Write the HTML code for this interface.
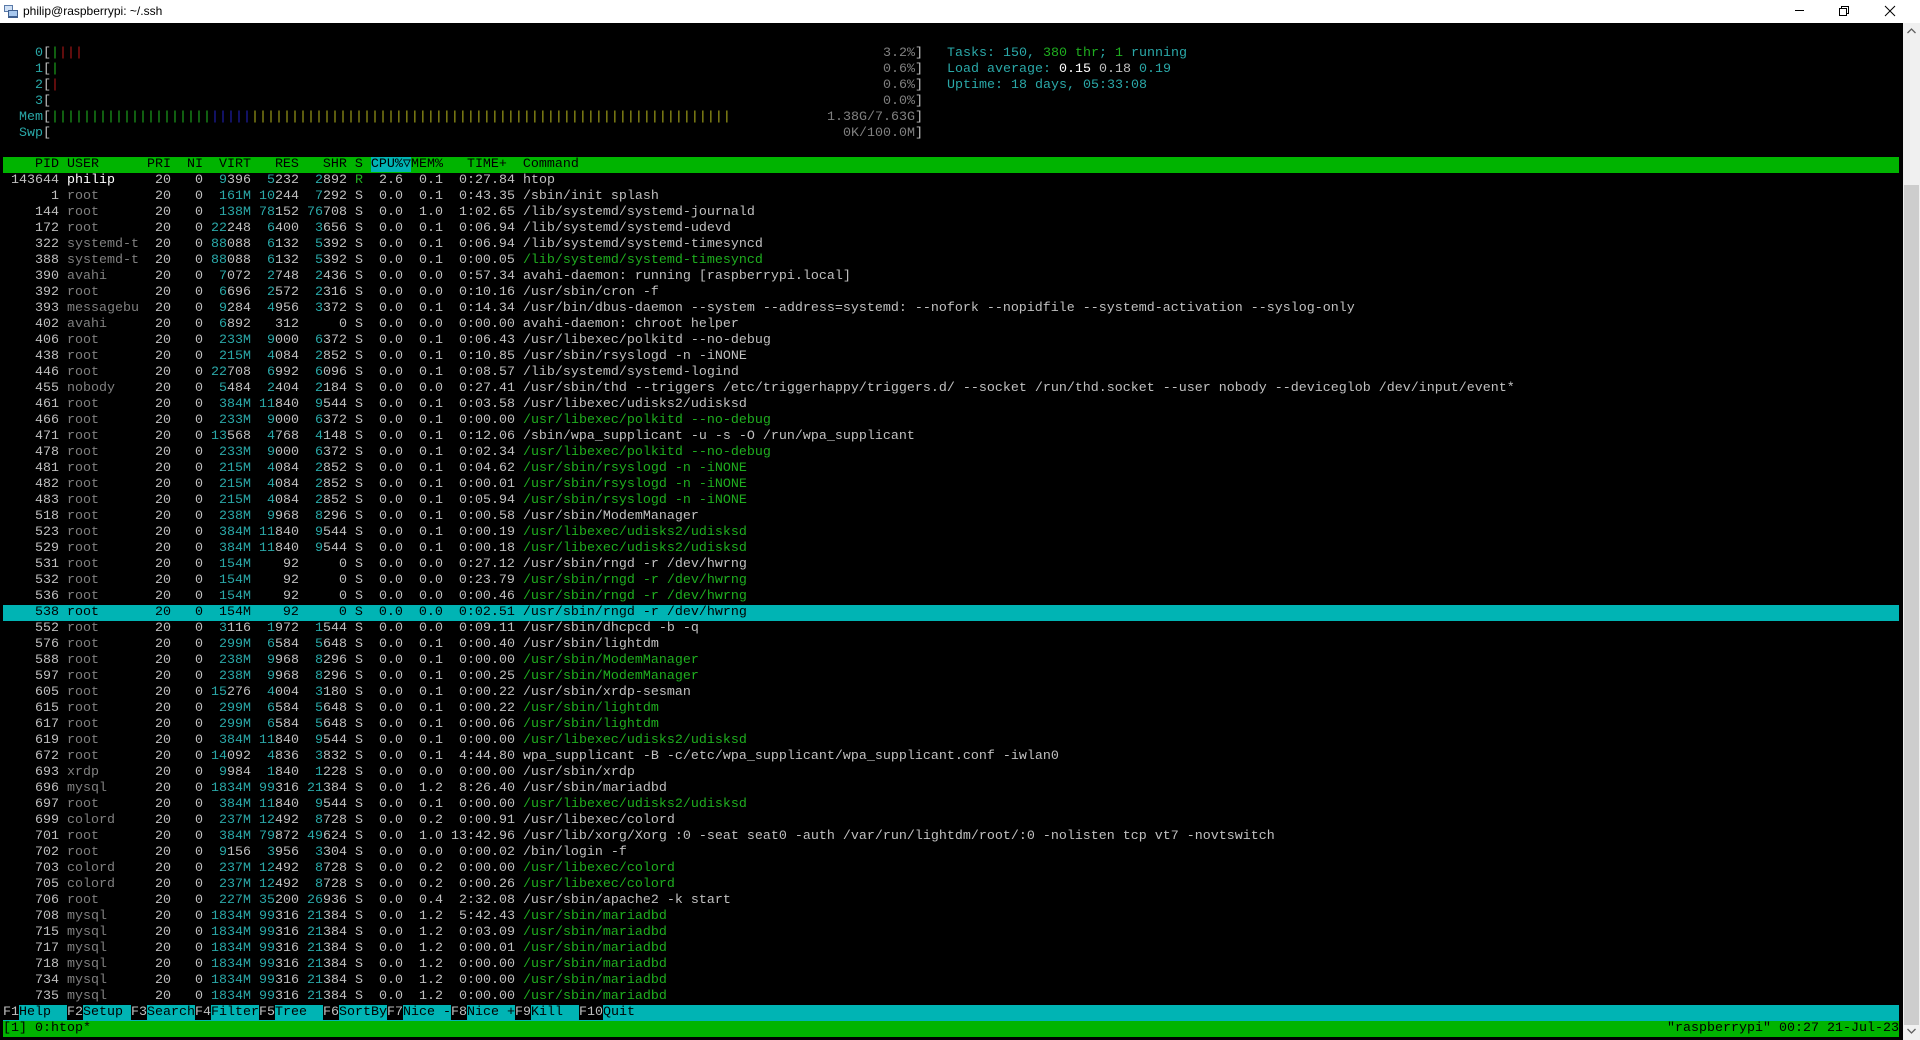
<!DOCTYPE html>
<html><head><meta charset="utf-8"><style>
*{margin:0;padding:0;box-sizing:border-box}
html,body{width:1920px;height:1040px;overflow:hidden;background:#000}
#title{position:absolute;left:0;top:0;width:1920px;height:23px;background:#fff;font:12px "Liberation Sans",sans-serif;color:#000}
#title .t{position:absolute;left:23px;top:4px}
#term{position:absolute;left:0;top:25px;width:1903px;height:1015px;background:#000}
#sb{position:absolute;left:1903px;top:23px;width:17px;height:1017px;background:#f0f0f0}
#thumb{position:absolute;left:1px;top:162px;width:15px;height:840px;background:#cdcdcd}
.L{position:absolute;left:3px;width:1896px;height:16px;white-space:pre;font:13.33px/16px "Liberation Mono",monospace;color:#c0c0c0}
.L i,.L b,.L u,.L em,.L s,.L var,.L kbd{font:inherit;text-decoration:none;font-style:normal}
i{color:#2aa8a8}b{color:#1fae1f}u{color:#808080}em{color:#fff}s{color:#b01818}var{color:#2020b8}kbd{color:#a8a81a}
.hdr{background:#00b400;color:#000}
.sel{background:#00b4b4;color:#000}
.sel i,.sel b,.sel u{color:#000}
.cpu{background:#00b4b4}
.fk{color:#000}
.fk .k{color:#c0c0c0;background:#000}
.st{background:#00b400;color:#000}
.ab{position:absolute;top:0}
</style></head><body>
<div id="title">
<svg style="position:absolute;left:3px;top:4px" width="16" height="15" viewBox="0 0 16 15"><rect x="1" y="1" width="9" height="7" fill="#5a7aa8"/><rect x="2" y="2" width="7" height="5" fill="#cfe0f5"/><rect x="5" y="6" width="10" height="8" fill="#3f5f8f"/><rect x="6" y="7" width="8" height="5" fill="#a8c8ee"/></svg>
<span class="t">philip@raspberrypi: ~/.ssh</span>
<svg style="position:absolute;left:1795px;top:0" width="125" height="23"><line x1="0" y1="10.5" x2="9" y2="10.5" stroke="#000"/><rect x="44.5" y="8.5" width="7" height="7" fill="none" stroke="#000"/><path d="M46.5 8.5V6.5H53.5V13.5H51.5" fill="none" stroke="#000"/><path d="M90 6L100 16M100 6L90 16" stroke="#000"/></svg>
</div>
<div id="term">
<div class="L" style="top:21px">    <i>0</i>[<b>|</b><s>|||</s><span class="ab" style="left:880px"><u>3.2%</u>]</span><span class="ab" style="left:944px"><i>Tasks: </i><i>150</i><i>, </i><b>380</b><b> thr</b><i>; </i><b>1</b><i> running</i></span></div>
<div class="L" style="top:37px">    <i>1</i>[<b>|</b><span class="ab" style="left:880px"><u>0.6%</u>]</span><span class="ab" style="left:944px"><i>Load average: </i><em>0.15 </em>0.18 <i>0.19</i></span></div>
<div class="L" style="top:53px">    <i>2</i>[<s>|</s><span class="ab" style="left:880px"><u>0.6%</u>]</span><span class="ab" style="left:944px"><i>Uptime: 18 days, 05:33:08</i></span></div>
<div class="L" style="top:69px">    <i>3</i>[<span class="ab" style="left:880px"><u>0.0%</u>]</span></div>
<div class="L" style="top:85px">  <i>Mem</i>[<b>||||||||||||||||||||</b><var>|||||</var><kbd>||||||||||||||||||||||||||||||||||||||||||||||||||||||||||||</kbd><span class="ab" style="left:824px"><u>1.38G/7.63G</u>]</span></div>
<div class="L" style="top:101px">  <i>Swp</i>[<span class="ab" style="left:840px"><u>0K/100.0M</u>]</span></div>
<div class="L hdr" style="top:132px">    PID USER      PRI  NI  VIRT   RES   SHR S <span class="cpu">CPU%▽</span>MEM%   TIME+  Command</div>
<div class="L" style="top:148px"> 143644 <em>philip</em>     20   0  <i>9</i>396  <i>5</i>232  <i>2</i>892 <b>R</b>  2.6  0.1  0:27.84 htop</div>
<div class="L" style="top:164px">      1 <u>root</u>       20   0  <i>161M</i> <i>10</i>244  <i>7</i>292 S  0.0  0.1  0:43.35 /sbin/init splash</div>
<div class="L" style="top:180px">    144 <u>root</u>       20   0  <i>138M</i> <i>78</i>152 <i>76</i>708 S  0.0  1.0  1:02.65 /lib/systemd/systemd-journald</div>
<div class="L" style="top:196px">    172 <u>root</u>       20   0 <i>22</i>248  <i>6</i>400  <i>3</i>656 S  0.0  0.1  0:06.94 /lib/systemd/systemd-udevd</div>
<div class="L" style="top:212px">    322 <u>systemd-t</u>  20   0 <i>88</i>088  <i>6</i>132  <i>5</i>392 S  0.0  0.1  0:06.94 /lib/systemd/systemd-timesyncd</div>
<div class="L" style="top:228px">    388 <u>systemd-t</u>  20   0 <i>88</i>088  <i>6</i>132  <i>5</i>392 S  0.0  0.1  0:00.05 <b>/lib/systemd/systemd-timesyncd</b></div>
<div class="L" style="top:244px">    390 <u>avahi</u>      20   0  <i>7</i>072  <i>2</i>748  <i>2</i>436 S  0.0  0.0  0:57.34 avahi-daemon: running [raspberrypi.local]</div>
<div class="L" style="top:260px">    392 <u>root</u>       20   0  <i>6</i>696  <i>2</i>572  <i>2</i>316 S  0.0  0.0  0:10.16 /usr/sbin/cron -f</div>
<div class="L" style="top:276px">    393 <u>messagebu</u>  20   0  <i>9</i>284  <i>4</i>956  <i>3</i>372 S  0.0  0.1  0:14.34 /usr/bin/dbus-daemon --system --address=systemd: --nofork --nopidfile --systemd-activation --syslog-only</div>
<div class="L" style="top:292px">    402 <u>avahi</u>      20   0  <i>6</i>892   312     0 S  0.0  0.0  0:00.00 avahi-daemon: chroot helper</div>
<div class="L" style="top:308px">    406 <u>root</u>       20   0  <i>233M</i>  <i>9</i>000  <i>6</i>372 S  0.0  0.1  0:06.43 /usr/libexec/polkitd --no-debug</div>
<div class="L" style="top:324px">    438 <u>root</u>       20   0  <i>215M</i>  <i>4</i>084  <i>2</i>852 S  0.0  0.1  0:10.85 /usr/sbin/rsyslogd -n -iNONE</div>
<div class="L" style="top:340px">    446 <u>root</u>       20   0 <i>22</i>708  <i>6</i>992  <i>6</i>096 S  0.0  0.1  0:08.57 /lib/systemd/systemd-logind</div>
<div class="L" style="top:356px">    455 <u>nobody</u>     20   0  <i>5</i>484  <i>2</i>404  <i>2</i>184 S  0.0  0.0  0:27.41 /usr/sbin/thd --triggers /etc/triggerhappy/triggers.d/ --socket /run/thd.socket --user nobody --deviceglob /dev/input/event*</div>
<div class="L" style="top:372px">    461 <u>root</u>       20   0  <i>384M</i> <i>11</i>840  <i>9</i>544 S  0.0  0.1  0:03.58 /usr/libexec/udisks2/udisksd</div>
<div class="L" style="top:388px">    466 <u>root</u>       20   0  <i>233M</i>  <i>9</i>000  <i>6</i>372 S  0.0  0.1  0:00.00 <b>/usr/libexec/polkitd --no-debug</b></div>
<div class="L" style="top:404px">    471 <u>root</u>       20   0 <i>13</i>568  <i>4</i>768  <i>4</i>148 S  0.0  0.1  0:12.06 /sbin/wpa_supplicant -u -s -O /run/wpa_supplicant</div>
<div class="L" style="top:420px">    478 <u>root</u>       20   0  <i>233M</i>  <i>9</i>000  <i>6</i>372 S  0.0  0.1  0:02.34 <b>/usr/libexec/polkitd --no-debug</b></div>
<div class="L" style="top:436px">    481 <u>root</u>       20   0  <i>215M</i>  <i>4</i>084  <i>2</i>852 S  0.0  0.1  0:04.62 <b>/usr/sbin/rsyslogd -n -iNONE</b></div>
<div class="L" style="top:452px">    482 <u>root</u>       20   0  <i>215M</i>  <i>4</i>084  <i>2</i>852 S  0.0  0.1  0:00.01 <b>/usr/sbin/rsyslogd -n -iNONE</b></div>
<div class="L" style="top:468px">    483 <u>root</u>       20   0  <i>215M</i>  <i>4</i>084  <i>2</i>852 S  0.0  0.1  0:05.94 <b>/usr/sbin/rsyslogd -n -iNONE</b></div>
<div class="L" style="top:484px">    518 <u>root</u>       20   0  <i>238M</i>  <i>9</i>968  <i>8</i>296 S  0.0  0.1  0:00.58 /usr/sbin/ModemManager</div>
<div class="L" style="top:500px">    523 <u>root</u>       20   0  <i>384M</i> <i>11</i>840  <i>9</i>544 S  0.0  0.1  0:00.19 <b>/usr/libexec/udisks2/udisksd</b></div>
<div class="L" style="top:516px">    529 <u>root</u>       20   0  <i>384M</i> <i>11</i>840  <i>9</i>544 S  0.0  0.1  0:00.18 <b>/usr/libexec/udisks2/udisksd</b></div>
<div class="L" style="top:532px">    531 <u>root</u>       20   0  <i>154M</i>    92     0 S  0.0  0.0  0:27.12 /usr/sbin/rngd -r /dev/hwrng</div>
<div class="L" style="top:548px">    532 <u>root</u>       20   0  <i>154M</i>    92     0 S  0.0  0.0  0:23.79 <b>/usr/sbin/rngd -r /dev/hwrng</b></div>
<div class="L" style="top:564px">    536 <u>root</u>       20   0  <i>154M</i>    92     0 S  0.0  0.0  0:00.46 <b>/usr/sbin/rngd -r /dev/hwrng</b></div>
<div class="L sel" style="top:580px">    538 root       20   0  154M    92     0 S  0.0  0.0  0:02.51 /usr/sbin/rngd -r /dev/hwrng</div>
<div class="L" style="top:596px">    552 <u>root</u>       20   0  <i>3</i>116  <i>1</i>972  <i>1</i>544 S  0.0  0.0  0:09.11 /usr/sbin/dhcpcd -b -q</div>
<div class="L" style="top:612px">    576 <u>root</u>       20   0  <i>299M</i>  <i>6</i>584  <i>5</i>648 S  0.0  0.1  0:00.40 /usr/sbin/lightdm</div>
<div class="L" style="top:628px">    588 <u>root</u>       20   0  <i>238M</i>  <i>9</i>968  <i>8</i>296 S  0.0  0.1  0:00.00 <b>/usr/sbin/ModemManager</b></div>
<div class="L" style="top:644px">    597 <u>root</u>       20   0  <i>238M</i>  <i>9</i>968  <i>8</i>296 S  0.0  0.1  0:00.25 <b>/usr/sbin/ModemManager</b></div>
<div class="L" style="top:660px">    605 <u>root</u>       20   0 <i>15</i>276  <i>4</i>004  <i>3</i>180 S  0.0  0.1  0:00.22 /usr/sbin/xrdp-sesman</div>
<div class="L" style="top:676px">    615 <u>root</u>       20   0  <i>299M</i>  <i>6</i>584  <i>5</i>648 S  0.0  0.1  0:00.22 <b>/usr/sbin/lightdm</b></div>
<div class="L" style="top:692px">    617 <u>root</u>       20   0  <i>299M</i>  <i>6</i>584  <i>5</i>648 S  0.0  0.1  0:00.06 <b>/usr/sbin/lightdm</b></div>
<div class="L" style="top:708px">    619 <u>root</u>       20   0  <i>384M</i> <i>11</i>840  <i>9</i>544 S  0.0  0.1  0:00.00 <b>/usr/libexec/udisks2/udisksd</b></div>
<div class="L" style="top:724px">    672 <u>root</u>       20   0 <i>14</i>092  <i>4</i>836  <i>3</i>832 S  0.0  0.1  4:44.80 wpa_supplicant -B -c/etc/wpa_supplicant/wpa_supplicant.conf -iwlan0</div>
<div class="L" style="top:740px">    693 <u>xrdp</u>       20   0  <i>9</i>984  <i>1</i>840  <i>1</i>228 S  0.0  0.0  0:00.00 /usr/sbin/xrdp</div>
<div class="L" style="top:756px">    696 <u>mysql</u>      20   0 <i>1834M</i> <i>99</i>316 <i>21</i>384 S  0.0  1.2  8:26.40 /usr/sbin/mariadbd</div>
<div class="L" style="top:772px">    697 <u>root</u>       20   0  <i>384M</i> <i>11</i>840  <i>9</i>544 S  0.0  0.1  0:00.00 <b>/usr/libexec/udisks2/udisksd</b></div>
<div class="L" style="top:788px">    699 <u>colord</u>     20   0  <i>237M</i> <i>12</i>492  <i>8</i>728 S  0.0  0.2  0:00.91 /usr/libexec/colord</div>
<div class="L" style="top:804px">    701 <u>root</u>       20   0  <i>384M</i> <i>79</i>872 <i>49</i>624 S  0.0  1.0 13:42.96 /usr/lib/xorg/Xorg :0 -seat seat0 -auth /var/run/lightdm/root/:0 -nolisten tcp vt7 -novtswitch</div>
<div class="L" style="top:820px">    702 <u>root</u>       20   0  <i>9</i>156  <i>3</i>956  <i>3</i>304 S  0.0  0.0  0:00.02 /bin/login -f</div>
<div class="L" style="top:836px">    703 <u>colord</u>     20   0  <i>237M</i> <i>12</i>492  <i>8</i>728 S  0.0  0.2  0:00.00 <b>/usr/libexec/colord</b></div>
<div class="L" style="top:852px">    705 <u>colord</u>     20   0  <i>237M</i> <i>12</i>492  <i>8</i>728 S  0.0  0.2  0:00.26 <b>/usr/libexec/colord</b></div>
<div class="L" style="top:868px">    706 <u>root</u>       20   0  <i>227M</i> <i>35</i>200 <i>26</i>936 S  0.0  0.4  2:32.08 /usr/sbin/apache2 -k start</div>
<div class="L" style="top:884px">    708 <u>mysql</u>      20   0 <i>1834M</i> <i>99</i>316 <i>21</i>384 S  0.0  1.2  5:42.43 <b>/usr/sbin/mariadbd</b></div>
<div class="L" style="top:900px">    715 <u>mysql</u>      20   0 <i>1834M</i> <i>99</i>316 <i>21</i>384 S  0.0  1.2  0:03.09 <b>/usr/sbin/mariadbd</b></div>
<div class="L" style="top:916px">    717 <u>mysql</u>      20   0 <i>1834M</i> <i>99</i>316 <i>21</i>384 S  0.0  1.2  0:00.01 <b>/usr/sbin/mariadbd</b></div>
<div class="L" style="top:932px">    718 <u>mysql</u>      20   0 <i>1834M</i> <i>99</i>316 <i>21</i>384 S  0.0  1.2  0:00.00 <b>/usr/sbin/mariadbd</b></div>
<div class="L" style="top:948px">    734 <u>mysql</u>      20   0 <i>1834M</i> <i>99</i>316 <i>21</i>384 S  0.0  1.2  0:00.00 <b>/usr/sbin/mariadbd</b></div>
<div class="L" style="top:964px">    735 <u>mysql</u>      20   0 <i>1834M</i> <i>99</i>316 <i>21</i>384 S  0.0  1.2  0:00.00 <b>/usr/sbin/mariadbd</b></div>
<div class="L fk" style="top:980px;background:#00b4b4"><span class="k">F1</span>Help  <span class="k">F2</span>Setup <span class="k">F3</span>Search<span class="k">F4</span>Filter<span class="k">F5</span>Tree  <span class="k">F6</span>SortBy<span class="k">F7</span>Nice -<span class="k">F8</span>Nice +<span class="k">F9</span>Kill  <span class="k">F10</span>Quit</div>
<div class="L st" style="top:996px">[1] 0:htop*<span class="ab" style="right:0">"raspberrypi" 00:27 21-Jul-23</span></div>
</div>
<div id="sb">
<svg style="position:absolute;left:4px;top:5px" width="9" height="6"><path d="M0.5 5L4.5 1L8.5 5" fill="none" stroke="#606060" stroke-width="1.3"/></svg>
<div id="thumb"></div>
<svg style="position:absolute;left:4px;top:1005px" width="9" height="6"><path d="M0.5 1L4.5 5L8.5 1" fill="none" stroke="#606060" stroke-width="1.3"/></svg>
</div>
</body></html>
